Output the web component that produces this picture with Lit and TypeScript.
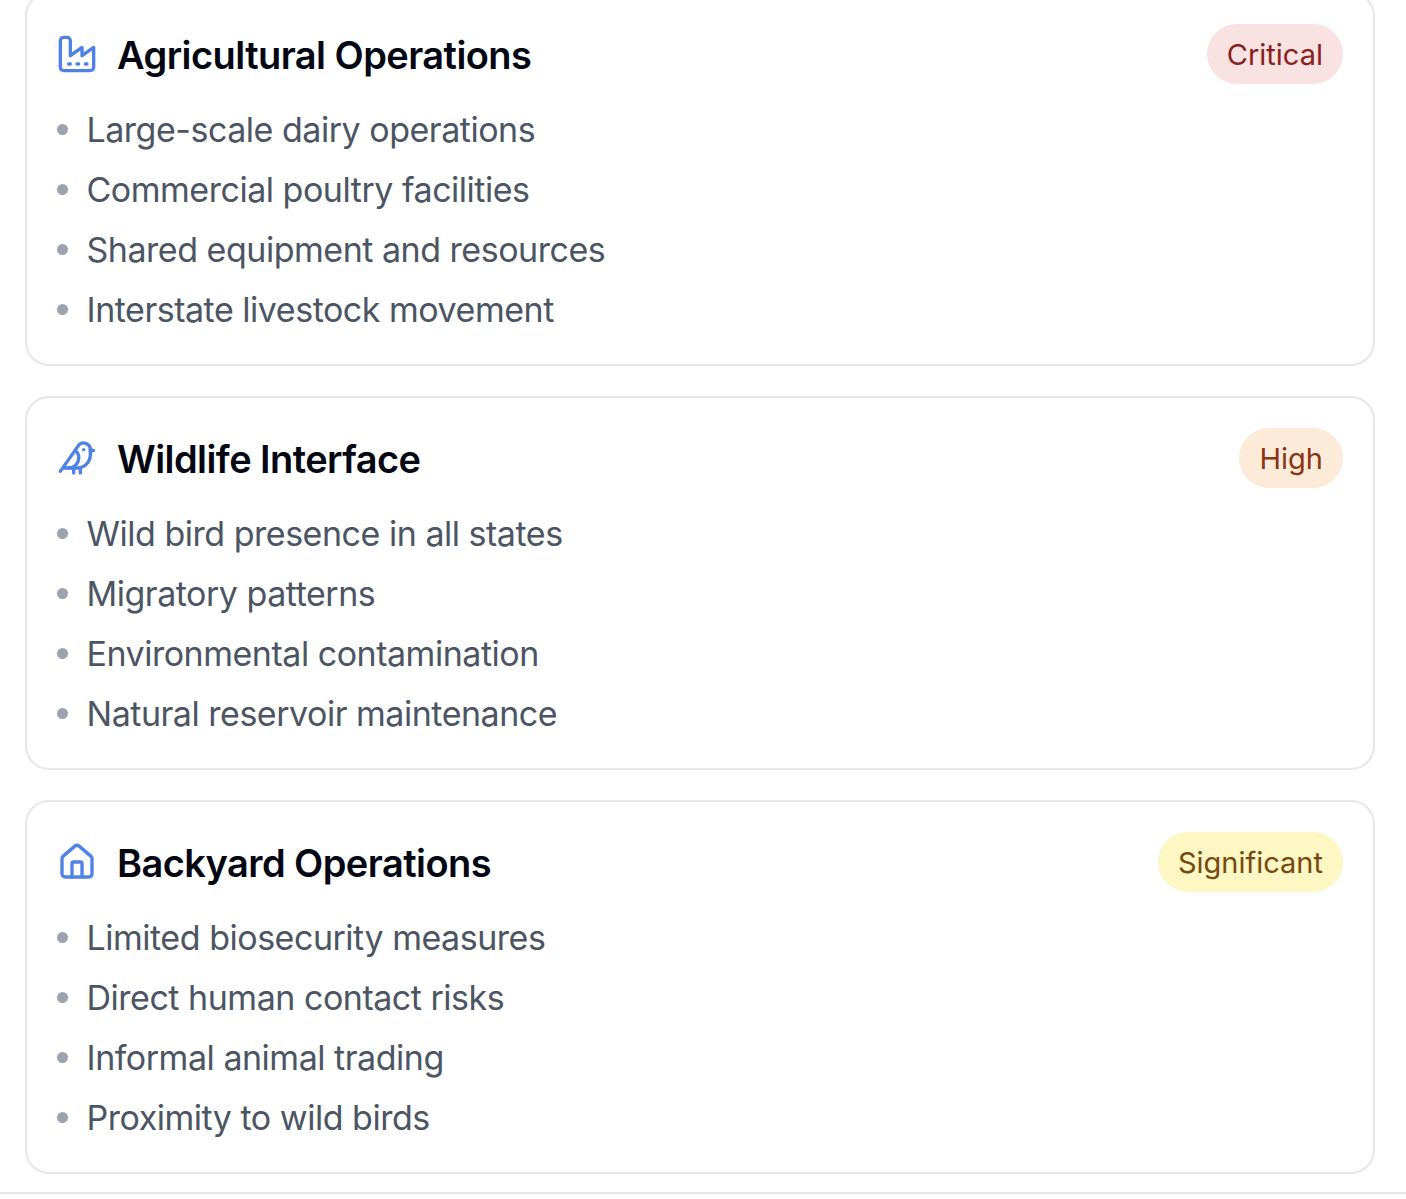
import { LitElement, html, css, svg } from "lit";
import { customElement } from "lit/decorators.js";

const icons = {
  factory: svg`<path d="M2 20a2 2 0 0 0 2 2h16a2 2 0 0 0 2-2V8l-7 5V8l-7 5V4a2 2 0 0 0-2-2H4a2 2 0 0 0-2 2Z"/><path d="M17 18h1"/><path d="M12 18h1"/><path d="M7 18h1"/>`,
  bird: svg`<path d="M16 7h.01"/><path d="M3.4 18H12a8 8 0 0 0 8-8V7a4 4 0 0 0-7.28-2.3L2 20"/><path d="m20 7 2 .5-2 .5"/><path d="M10 18v3"/><path d="M14 17.75V21"/><path d="M7 18a6 6 0 0 0 3.84-10.61"/>`,
  house: svg`<path d="M15 21v-8a1 1 0 0 0-1-1h-4a1 1 0 0 0-1 1v8"/><path d="M3 10a2 2 0 0 1 .709-1.528l7-5.999a2 2 0 0 1 2.582 0l7 5.999A2 2 0 0 1 21 10v9a2 2 0 0 1-2 2H5a2 2 0 0 1-2-2z"/>`,
};

const cards = [
  { icon: icons.factory, title: "Agricultural Operations", badge: "Critical", tone: "critical", items: ["Large-scale dairy operations", "Commercial poultry facilities", "Shared equipment and resources", "Interstate livestock movement"] },
  { icon: icons.bird, title: "Wildlife Interface", badge: "High", tone: "high", items: ["Wild bird presence in all states", "Migratory patterns", "Environmental contamination", "Natural reservoir maintenance"] },
  { icon: icons.house, title: "Backyard Operations", badge: "Significant", tone: "significant", items: ["Limited biosecurity measures", "Direct human contact risks", "Informal animal trading", "Proximity to wild birds"] },
];

@customElement("app-root")
export class AppRoot extends LitElement {
  static styles = css`
    :host { display: block; height: 1199px; overflow: hidden; background: #fff; font-family: Inter, "Liberation Sans", sans-serif; }
    .page { margin-top: -8px; padding: 0 31px 18px 25px; display: flex; flex-direction: column; gap: 30px; border-bottom: 2px solid #e5e7eb; }
    .card { border: 2px solid #e5e7eb; border-radius: 24px; padding: 30px; background: #fff; }
    .head { display: flex; align-items: center; height: 60px; margin-bottom: 22px; }
    .icon { width: 40px; height: 40px; margin-right: 20px; flex: none; fill: none; stroke: #4f82e6; stroke-width: 2; stroke-linecap: round; stroke-linejoin: round; }
    h3 { margin: 2px 0 0; flex: 1; font-size: 38px; line-height: 50px; letter-spacing: -0.57px; font-weight: 600; color: #030712; }
    .badge { height: 60px; line-height: 62px; padding: 0 20px; border-radius: 30px; font-size: 29px; font-weight: 400; }
    .critical { background: #f9e2e2; color: #8a2121; }
    .high { background: #fcebd9; color: #8a3514; }
    .significant { background: #fdf7c3; color: #754a10; }
    ul { list-style: none; margin: 0; padding: 0; display: flex; flex-direction: column; gap: 12px; }
    li { display: flex; align-items: center; gap: 18.5px; font-size: 34px; line-height: 48px; letter-spacing: -0.48px; color: #4b5563; }
    .dot { width: 11px; height: 11px; margin-top: -2px; border-radius: 50%; background: #9ca3af; flex: none; }
  `;

  render() {
    return html`<div class="page">
      ${cards.map(c => html`<section class="card">
        <div class="head">
          <svg class="icon" viewBox="0 0 24 24">${c.icon}</svg>
          <h3>${c.title}</h3>
          <span class="badge ${c.tone}">${c.badge}</span>
        </div>
        <ul>${c.items.map(i => html`<li><span class="dot"></span>${i}</li>`)}</ul>
      </section>`)}
    </div>`;
  }
}
